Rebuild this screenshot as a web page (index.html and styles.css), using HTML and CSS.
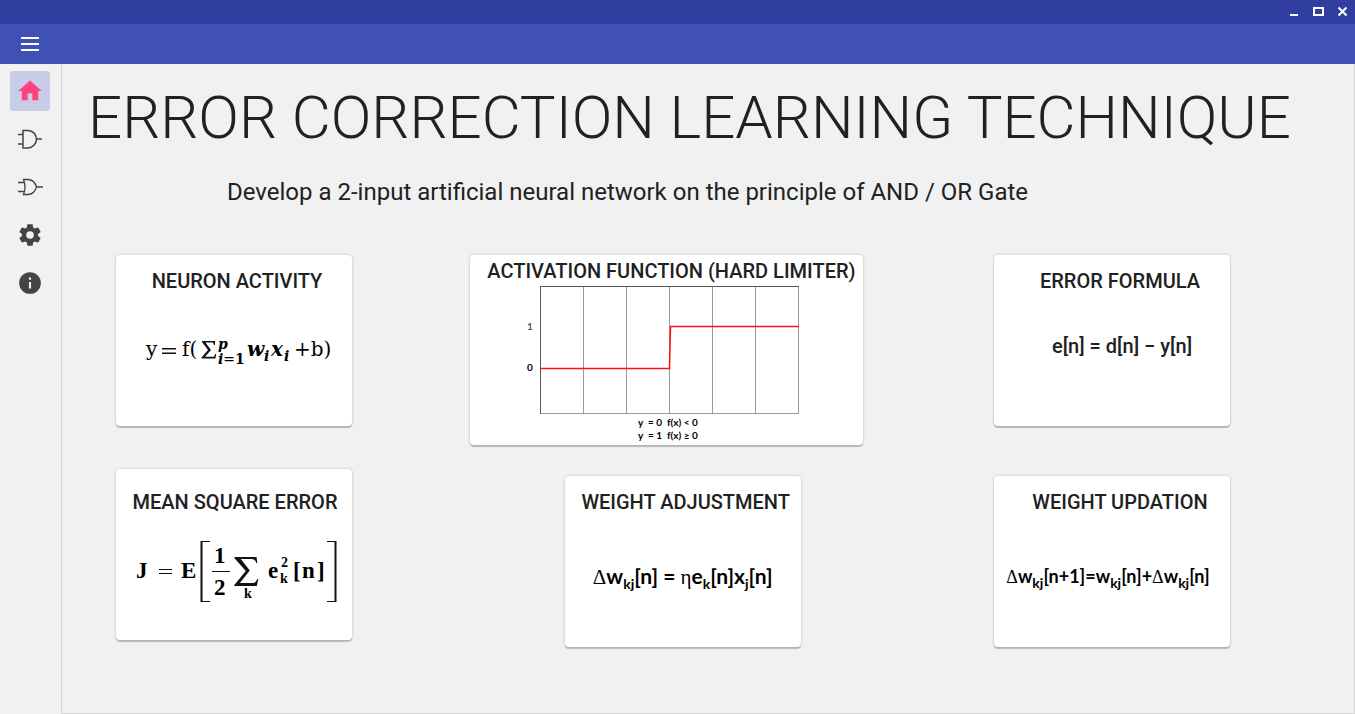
FILE: index.html
```html
<!DOCTYPE html>
<html lang="en">
<head>
<meta charset="utf-8">
<title>Error Correction Learning Technique</title>
<link rel="stylesheet" href="styles.css">
</head>
<body>
<div class="app">
  <header>
    <div class="title-bar">
      <button class="window-button" aria-label="Minimize"><svg width="12" height="12" viewBox="0 0 12 12"><path d="M2 8h8v2H2z"/></svg></button>
      <button class="window-button" aria-label="Maximize"><svg width="12" height="12" viewBox="0 0 12 12"><path fill-rule="evenodd" d="M1 1h11v9H1zM3 3v5h7V3z"/></svg></button>
      <button class="window-button" aria-label="Close"><svg width="12" height="12" viewBox="0 0 12 12"><path class="stroke" d="M2.500 1.500l8 8M10.500 1.500l-8 8"/></svg></button>
    </div>
    <div class="app-bar">
      <button class="menu-button" aria-label="Open menu"><svg width="20" height="20" viewBox="0 0 20 20"><path d="M1 3h18v2H1zM1 9h18v2H1zM1 15h18v2H1z"/></svg></button>
    </div>
  </header>
  <div class="body">
    <nav class="sidebar" aria-label="Sections">
      <button class="nav-button active" aria-label="Home"><svg width="28" height="28" viewBox="0 0 24 24"><path d="M10 20v-6h4v6h5v-8h3L12 3 2 12h3v8z"/></svg></button>
      <button class="nav-button" aria-label="AND gate"><svg class="gate" width="26" height="22" viewBox="0 0 26 22"><path d="M6 2.500h5c5 .2 8.500 4 8.500 8.500s-3.500 8.700-8.500 9H6zM1 6.500h5M1 16h5M19.500 11H25"/></svg></button>
      <button class="nav-button" aria-label="OR gate"><svg class="gate thin" width="26" height="22" viewBox="0 0 26 22"><path d="M6.500 3.500h5c4.500.5 7 4 8 7.500-1 3.500-3.500 7-8 7.500h-5c2-5 2-10 0-15zM1 6.500h6.500M1 15.500h6.500M19.500 11H26"/></svg></button>
      <button class="nav-button" aria-label="Settings"><svg width="26" height="26" viewBox="0 0 24 24"><path d="M12 15.500A3.500 3.500 0 0 1 8.500 12 3.500 3.500 0 0 1 12 8.500a3.500 3.500 0 0 1 3.500 3.500 3.500 3.500 0 0 1-3.500 3.500m7.430-2.530c.04-.32.07-.64.07-.97s-.03-.66-.07-1l2.110-1.630c.19-.15.24-.42.12-.64l-2-3.460c-.12-.22-.39-.31-.61-.22l-2.490 1c-.52-.39-1.060-.73-1.690-.98l-.37-2.650A.506.506 0 0 0 14 2h-4c-.25 0-.46.18-.5.42l-.37 2.650c-.63.25-1.170.59-1.690.98l-2.490-1c-.22-.09-.49 0-.61.22l-2 3.460c-.13.22-.07.49.12.64L4.570 11c-.04.34-.07.67-.07 1s.03.65.07.97l-2.110 1.660c-.19.15-.25.42-.12.64l2 3.460c.12.22.39.3.61.22l2.490-1.010c.52.4 1.060.74 1.690.99l.37 2.650c.04.24.25.42.5.42h4c.25 0 .46-.18.5-.42l.37-2.650c.63-.26 1.170-.59 1.690-.99l2.490 1.010c.22.08.49 0 .61-.22l2-3.460c.12-.22.07-.49-.12-.64z"/></svg></button>
      <button class="nav-button" aria-label="About"><svg width="26" height="26" viewBox="0 0 24 24"><path d="M13 9h-2V7h2m0 10h-2v-6h2m-1-9A10 10 0 0 0 2 12a10 10 0 0 0 10 10 10 10 0 0 0 10-10A10 10 0 0 0 12 2z"/></svg></button>
    </nav>
    <main class="content">
      <h1 class="title">ERROR CORRECTION LEARNING TECHNIQUE</h1>
      <p class="subtitle">Develop a 2-input artificial neural network on the principle of AND / OR Gate</p>
      <div class="row row-top">
        <section class="card">
          <h2 class="card-title">NEURON ACTIVITY</h2>
          <svg class="figure neuron" width="236" height="40" viewBox="0 0 236 40" role="img" aria-label="Neuron activity formula">
            <text x="30" y="27" class="cambria">y</text>
            <path class="ink" d="M46 19h14v1.500H46zM46 23.500h14v1.500H46z"/>
            <text x="66" y="27" class="cambria">f(</text>
            <path class="ink" d="M86 12h13v4h-1l-1-2.500h-7.500l5.500 7.500-6 6.800h9l1.200-2.800h1l-.8 4.500H85.500v-1l6.500-7.500-6-8z"/>
            <text x="102" y="20" class="index">p</text>
            <text x="102" y="35" class="index">i<tspan class="plain">=</tspan><tspan class="upright">1</tspan></text>
            <text x="131" y="27" class="vector">w</text>
            <text x="148" y="32" class="index">i</text>
            <text x="155" y="27" class="vector">x</text>
            <text x="168" y="32" class="index">i</text>
            <text x="178" y="27" class="cambria">+b)</text>
          </svg>
        </section>
        <section class="card wide">
          <h2 class="card-title">ACTIVATION FUNCTION (HARD LIMITER)</h2>
          <svg class="figure" width="393" height="158" viewBox="0 0 393 158" role="img" aria-label="Hard limiter step function">
            <path class="grid-line" d="M113.500 1v126M156.500 1v126M199.500 1v126M242.500 1v126M285.500 1v126M328.500 1v126M70 127.500h259"/>
            <path class="axis" d="M70.500 127.500V.5h258.500"/>
            <path class="step" d="M70 82.500h129.500l1-42H329"/>
            <text x="57" y="44" class="tick light">1</text>
            <text x="57" y="85" class="tick">0</text>
            <text x="168" y="140" class="note">y</text><text x="178" y="140" class="note">= 0</text><text x="197" y="140" class="note">f(x) &lt; 0</text>
            <text x="168" y="153" class="note">y</text><text x="178" y="153" class="note">= 1</text><text x="197" y="153" class="note">f(x) ≥ 0</text>
          </svg>
        </section>
        <section class="card">
          <h2 class="card-title shifted">ERROR FORMULA</h2>
          <p class="formula-text">e[n] = d[n] − y[n]</p>
        </section>
      </div>
      <div class="row row-bottom">
        <section class="card first">
          <h2 class="card-title">MEAN SQUARE ERROR</h2>
          <svg class="figure mean" width="236" height="68" viewBox="0 0 236 68" role="img" aria-label="Mean square error formula">
            <text x="20" y="41" class="times">J</text>
            <path class="ink" d="M43 32h13v1H43zM43 36h13v1H43z"/>
            <text x="65" y="41" class="times">E</text>
            <path class="bracket" d="M85.500 4v61M219.500 4v61"/>
            <path class="ink" d="M85 4h9v1h-9zM85 64h9v1h-9zM211 4h9v1h-9zM211 64h9v1h-9z"/>
            <text x="98" y="26" class="times">1</text>
            <path class="ink" d="M96 34h18v1H96z"/>
            <text x="98" y="58" class="times">2</text>
            <path class="ink" d="M118.500 20h22l.8 6h-1c-1-3-2-4-5-4h-10.500l9 11.500-10 12.500h12c3.500 0 4.500-1.500 5.500-4h1l-1.500 7h-22.500v-1l11.500-14-11.500-13z"/>
            <text x="128" y="61" class="times small">k</text>
            <text x="152" y="41" class="times">e</text>
            <text x="165" y="30" class="times small">2</text>
            <text x="164" y="46" class="times small">k</text>
            <text x="177" y="41" class="times">[</text><text x="186" y="41" class="times">n</text><text x="201" y="41" class="times">]</text>
          </svg>
        </section>
        <section class="card">
          <h2 class="card-title">WEIGHT ADJUSTMENT</h2>
          <p class="formula">
            <span class="greek">Δ</span>w<sub>kj</sub>[n] = <span class="greek">η</span>e<sub>k</sub>[n]x<sub>j</sub>[n]</p>
        </section>
        <section class="card">
          <h2 class="card-title shifted">WEIGHT UPDATION</h2>
          <p class="formula compact">
            <span class="greek">Δ</span>w<sub>kj</sub>[n+1]=w<sub>kj</sub>[n]+<span class="greek">Δ</span>w<sub>kj</sub>[n]</p>
        </section>
      </div>
    </main>
  </div>
</div>
</body>
</html>
```
FILE: styles.css
```css
* { box-sizing: border-box; }
body { margin: 0; font-family: Roboto, "Liberation Sans", sans-serif; color: #212121; background: #f1f1f1; }
h1, h2, p { margin: 0; }
button { border: 0; padding: 0; background: none; display: flex; align-items: center; justify-content: center; color: inherit; }
svg { display: block; fill: currentColor; }

.app { display: flex; flex-direction: column; min-height: 100vh; }
.title-bar { display: flex; justify-content: flex-end; height: 24px; background: #303f9f; color: #fff; padding-right: 1px; }
.window-button { width: 24px; height: 24px; }
.title-bar .stroke { fill: none; stroke: currentColor; stroke-width: 2; }
.app-bar { display: flex; align-items: center; height: 40px; padding: 0 20px; background: #3f51b5; color: #fff; }
.menu-button { width: 20px; height: 40px; }

.body { display: flex; flex: 1; }
.sidebar { display: flex; flex-direction: column; gap: 8px; width: 61px; padding: 7px 10px; color: #444; flex-shrink: 0; }
.nav-button { width: 40px; height: 40px; border-radius: 3px; }
.nav-button.active { background: #c8cce6; color: #ff4081; }
.gate { fill: none; stroke: #444; stroke-width: 1.500; }
.gate.thin { stroke-width: 1.300; }

.content { flex: 1; min-width: 0; border: 1px solid #d3d3d3; border-top: 0; padding: 18px 124px 32px 54px; }
.title { margin: 0 -80px 0 -28px; font-size: 60px; line-height: 72px; font-weight: 300; white-space: nowrap; }
.subtitle { margin: 22px 0 0 111px; font-size: 24px; line-height: 32px; }

.row { display: grid; align-items: start; }
.row-top { grid-template-columns: auto 9fr auto 10fr auto; margin-top: 47px; }
.row-bottom { grid-template-columns: auto 11fr auto 10fr auto; margin-top: 24px; align-items: end; min-height: 178px; }
.row .card:nth-child(2) { grid-column: 3; }
.row .card:nth-child(3) { grid-column: 5; }
.row .card.first { align-self: start; padding-top: 21px; }

.card { width: 236px; min-height: 171px; padding-top: 14px; background: #fff; border-radius: 4px; box-shadow: 0 2px 1px rgba(0, 0, 0, .2), 0 0 3px rgba(0, 0, 0, .2); }
.card.wide { width: 393px; min-height: 190px; padding-top: 4px; }
.card-title { padding-left: 6px; font-size: 20px; line-height: 24px; font-weight: 500; text-align: center; }
.card.first .card-title { padding-left: 2px; }
.wide .card-title { padding-left: 10px; }
.card-title.shifted { padding-left: 16px; }
.wide .figure { margin-top: 3px; }
.neuron { margin-top: 36px; }
.mean { margin-top: 23px; }

.formula-text { margin-top: 41px; padding-left: 20px; text-align: center; font-size: 20px; line-height: 24px; font-weight: 500; }
.formula { margin-top: 46px; text-align: center; font-family: Lato, "Liberation Sans", sans-serif; font-size: 21px; line-height: 32px; font-weight: 700; color: #000; white-space: nowrap; }
.formula.compact { font-size: 18px; padding-right: 8px; }
.formula sub { font-size: 14px; line-height: 1; }
.greek { font-family: "Liberation Serif", serif; font-weight: 400; }

.figure { color: #000; }
.ink { fill: #111; }
.cambria { font: 20px "DejaVu Serif", serif; }
.vector { font: italic bold 20px "DejaVu Serif", serif; }
.index { font: italic bold 14px "DejaVu Serif", serif; }
.upright { font-style: normal; }
.plain { font-weight: 400; }
.times { font: bold 23px "Liberation Serif", serif; }
.times.small { font-size: 14px; }
.bracket { fill: none; stroke: #111; stroke-width: 2; }
.grid-line { fill: none; stroke: #999; }
.axis { fill: none; stroke: #555; }
.step { fill: none; stroke: #f11; stroke-width: 1.500; }
.tick, .note { font: bold 10px Lato, sans-serif; }
.tick.light { fill: #555; }
```
